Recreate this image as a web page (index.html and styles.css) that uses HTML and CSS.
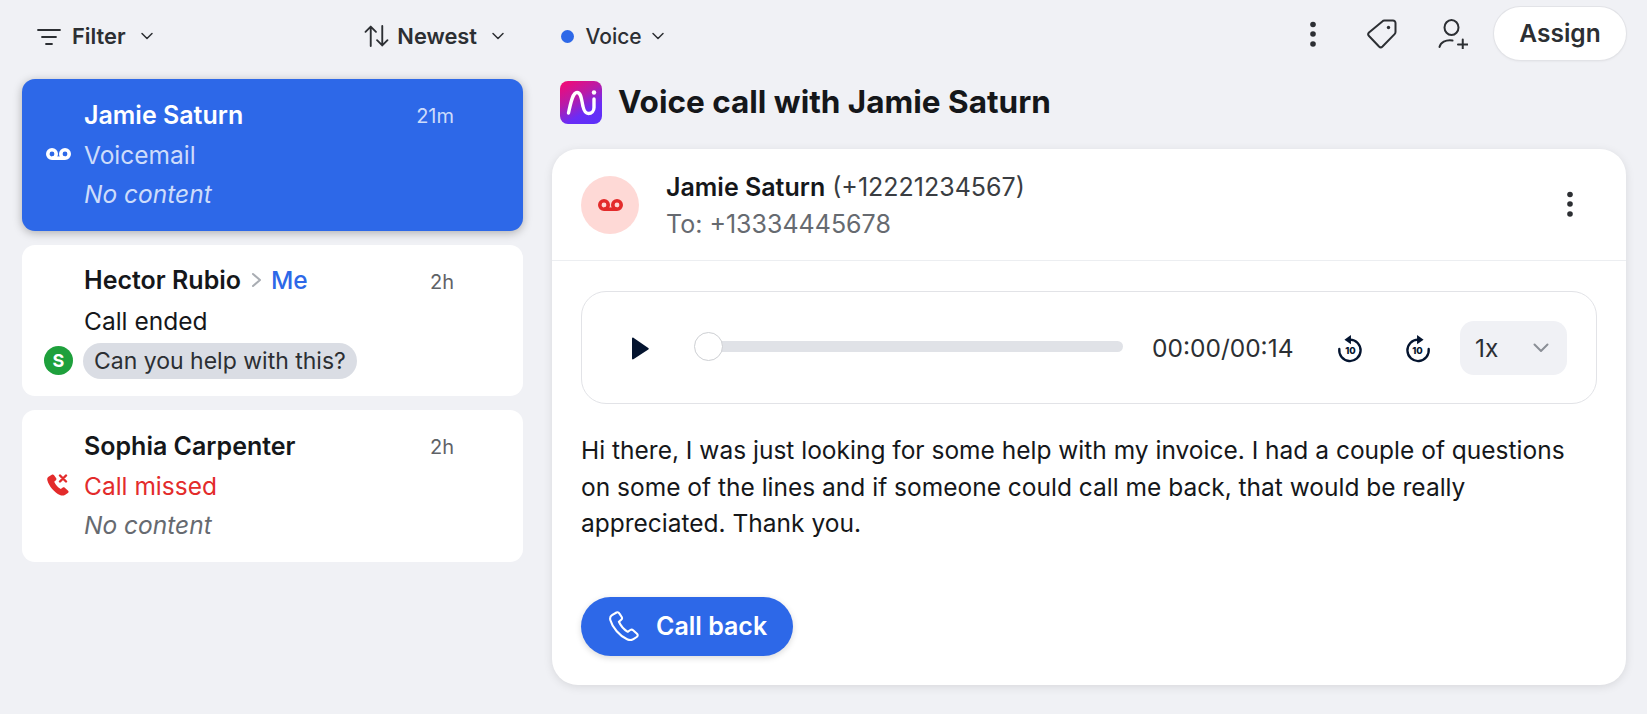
FILE: index.html
```html
<!DOCTYPE html>
<html lang="en">
<head>
<meta charset="utf-8">
<title>Voice call with Jamie Saturn</title>
<link rel="stylesheet" href="styles.css">
</head>
<body>
<div class="app">
  <header class="toolbar">
    <div class="toolbar-left">
      <button class="tool">
        <svg class="ic-filter" viewBox="0 0 24 17" fill="none" stroke="#2c2f33" stroke-width="1.8" stroke-linecap="round"><path d="M1 2h22M5 9h14M9 16h6"/></svg>
        <span>Filter</span>
        <svg class="ic-chev" viewBox="0 0 12 8" fill="none" stroke="#2c2f33" stroke-width="1.5" stroke-linecap="round" stroke-linejoin="round"><path d="M1 1.5l5 5 5-5"/></svg>
      </button>
      <button class="tool tool-sort">
        <svg class="ic-sort" viewBox="0 0 23 21" fill="none" stroke="#2c2f33" stroke-width="1.8" stroke-linecap="round" stroke-linejoin="round"><path d="M6 20V1.5M1 6.500l5-5 5 5M17 1v18.500M12 14.500l5 5 5-5"/></svg>
        <span>Newest</span>
        <svg class="ic-chev" viewBox="0 0 12 8" fill="none" stroke="#2c2f33" stroke-width="1.5" stroke-linecap="round" stroke-linejoin="round"><path d="M1 1.5l5 5 5-5"/></svg>
      </button>
    </div>
    <div class="toolbar-right">
      <button class="tool tool-voice">
        <span class="dot"></span>
        <span>Voice</span>
        <svg class="ic-chev" viewBox="0 0 12 8" fill="none" stroke="#2c2f33" stroke-width="1.5" stroke-linecap="round" stroke-linejoin="round"><path d="M1 1.5l5 5 5-5"/></svg>
      </button>
      <div class="actions">
        <svg class="ic-kebab" viewBox="0 0 8 26" fill="#2c2f33"><circle cx="4" cy="3.500" r="2.800"/><circle cx="4" cy="13" r="2.800"/><circle cx="4" cy="23" r="2.800"/></svg>
        <svg class="ic-tag" viewBox="0 0 30 31" fill="none" stroke="#2c2f33" stroke-width="2" stroke-linejoin="round"><path d="M17.500 2.500h8.500a2.500 2.500 0 0 1 2.500 2.500v9a3 3 0 0 1-.9 2.100L15.500 28.500a2.500 2.500 0 0 1-3.500 0L2 18a2.500 2.500 0 0 1 0-3.500L15.300 3.400a3 3 0 0 1 2.200-.9z"/><circle cx="21.500" cy="9.500" r="1.700" fill="#2c2f33" stroke="none"/></svg>
        <svg class="ic-person" viewBox="0 0 30 31" fill="none" stroke="#2c2f33" stroke-width="2" stroke-linecap="round"><ellipse cx="13.500" cy="9.500" rx="7" ry="7.500"/><path d="M1.500 29c1-4.500 6-7.500 13-6.500M20 26.500h9.500M24.750 21.500v10"/></svg>
        <button class="assign">Assign</button>
      </div>
    </div>
  </header>

  <div class="body">
    <aside class="list">
      <article class="item item-active">
        <div class="name-row"><span class="name">Jamie Saturn</span></div>
        <time class="age">21m</time>
        <div class="lead">
          <svg class="ic-vm" viewBox="0 0 25 14" fill="none" stroke="currentColor" stroke-width="3.600"><circle cx="6" cy="7" r="4.200"/><circle cx="19" cy="7" r="4.200"/><path d="M6 11.200h13"/></svg>
        </div>
        <div class="line">Voicemail</div>
        <div class="line line-3 muted">No content</div>
      </article>

      <article class="item">
        <div class="name-row">
          <span class="name">Hector Rubio</span>
          <svg class="ic-gt" viewBox="0 0 11 16" fill="none" stroke="#a9adb3" stroke-width="2" stroke-linecap="round" stroke-linejoin="round"><path d="M2 2l7 6-7 6"/></svg>
          <span class="me">Me</span>
        </div>
        <time class="age">2h</time>
        <div class="line">Call ended</div>
        <div class="lead lead-3"><span class="avatar">S</span></div>
        <div class="line line-3"><span class="chip">Can you help with this?</span></div>
      </article>

      <article class="item">
        <div class="name-row"><span class="name">Sophia Carpenter</span></div>
        <time class="age">2h</time>
        <div class="lead">
          <svg class="ic-missed" viewBox="0 0 22 22" fill="#e32b2b"><path d="M4.800 0.800 1.500 2.800C0.300 3.600 0 5 .4 6.500c1.600 5.600 7 12 12.500 14.500 1.700.8 3.400.9 5-.1l3-2c.8-.6.900-1.500.2-2.200l-3.300-3c-.6-.5-1.400-.6-2-.1l-2 1.500C11 13.600 8.600 10.800 7.200 7.800l1.700-1.500c.6-.5.700-1.400.3-2L6.900 1.100C6.400.5 5.500.4 4.800.8z"/><path d="M13 1.500l6 6M19 1.500l-6 6" fill="none" stroke="#e32b2b" stroke-width="2.400" stroke-linecap="round"/></svg>
        </div>
        <div class="line line-red">Call missed</div>
        <div class="line line-3 italic-grey">No content</div>
      </article>
    </aside>

    <main class="detail">
      <h1 class="title">
        <svg class="logo" viewBox="0 0 42 43">
          <defs><linearGradient id="lg" x1="0.150" y1="0" x2="0.700" y2="1"><stop offset="0" stop-color="#f00a78"/><stop offset="0.400" stop-color="#b81ca8"/><stop offset="0.750" stop-color="#6b2cf5"/><stop offset="1" stop-color="#5f30f8"/></linearGradient></defs>
          <rect width="42" height="43" rx="8" fill="url(#lg)"/>
          <path d="M8.500 32C11 20 13 11.500 17 11.500c4.500 0 4.500 8 6 14 1 4.500 2.500 7 5.500 7s5.500-2.500 5.500-6V18" fill="none" stroke="#fff" stroke-width="3.400" stroke-linecap="round"/>
          <circle cx="34" cy="11.500" r="2.200" fill="#fff"/>
        </svg>
        <span>Voice call with Jamie Saturn</span>
      </h1>

      <section class="card">
        <div class="card-head">
          <div class="vm-avatar">
            <svg class="ic-vm" viewBox="0 0 25 14" fill="none" stroke="#e32b2b" stroke-width="3.600"><circle cx="6" cy="7" r="4.200"/><circle cx="19" cy="7" r="4.200"/><path d="M6 11.200h13"/></svg>
          </div>
          <div class="who">
            <div class="who-name"><strong>Jamie Saturn</strong> (+12221234567)</div>
            <div class="who-to">To: +13334445678</div>
          </div>
          <svg class="ic-kebab ic-kebab-card" viewBox="0 0 8 26" fill="#2c2f33"><circle cx="4" cy="3.500" r="2.800"/><circle cx="4" cy="13" r="2.800"/><circle cx="4" cy="23" r="2.800"/></svg>
        </div>

        <div class="card-body">
          <div class="player">
            <svg class="ic-play" viewBox="0 0 18 23" fill="#04142f"><path d="M1 1.500v20c0 .8.700 1.200 1.400.8L17.300 12.500c.6-.4.600-1.100 0-1.500L2.400.7C1.700.3 1 .7 1 1.500z"/></svg>
            <div class="track"><span class="thumb"></span></div>
            <span class="clock">00:00/00:14</span>
            <svg class="ic-skip" viewBox="0 0 28 30" fill="none"><path d="M2.500 15.500a11.500 11.500 0 1 0 11.500-10" stroke="#04142f" stroke-width="2.500" stroke-linecap="round"/><path d="M15 .5v10l-7-5z" fill="#04142f"/><text x="14.500" y="21" class="skip-txt">10</text></svg>
            <svg class="ic-skip ic-skip-fwd" viewBox="0 0 28 30" fill="none"><path d="M25.500 15.500a11.500 11.500 0 1 1-11.500-10" stroke="#04142f" stroke-width="2.500" stroke-linecap="round"/><path d="M13 .5v10l7-5z" fill="#04142f"/><text x="13.500" y="21" class="skip-txt">10</text></svg>
            <div class="speed">
              <span>1x</span>
              <svg class="ic-chev-grey" viewBox="0 0 16 10" fill="none" stroke="#8b8f96" stroke-width="2" stroke-linecap="round" stroke-linejoin="round"><path d="M1.500 1.500 8 8l6.500-6.500"/></svg>
            </div>
          </div>

          <p class="transcript">Hi there, I was just looking for some help with my invoice. I had a couple of questions on some of the lines and if someone could call me back, that would be really appreciated. Thank you.</p>

          <button class="call-back">
            <svg class="ic-phone" viewBox="0 0 30 30" fill="none" stroke="#fff" stroke-width="2.100" stroke-linejoin="round"><path d="M7.500 1.500 3 4.200C1.300 5.300.8 7 1.300 9c2 7.500 9.500 16 16.800 19.300 2.200 1 4.300 1.200 6.300-.1l3.300-2.200c1.200-.8 1.300-2.200.3-3.200l-3.900-3.600c-.8-.7-1.900-.8-2.800-.2l-2.600 1.800c-3.900-2.300-7-6-8.800-10l2.300-2c.8-.7 1-1.900.5-2.800L10.300 2.400c-.6-1-1.800-1.400-2.800-.9z"/></svg>
            <span>Call back</span>
          </button>
        </div>
      </section>
    </main>
  </div>
</div>
</body>
</html>
```

FILE: styles.css
```css
* { box-sizing: border-box; }
html, body { margin: 0; padding: 0; }
body {
  background: #f0f1f5;
  font-family: Inter, "Liberation Sans", sans-serif;
  color: #15171a;
  height: 714px;
  overflow: hidden;
}
button { font-family: inherit; border: 0; background: none; padding: 0; cursor: pointer; }
svg { display: block; flex: none; }

.app { width: 1647px; }

/* toolbar */
.toolbar { display: grid; grid-template-columns: 552px 1fr; height: 79px; }
.toolbar-left {
  display: flex; justify-content: space-between; align-items: center;
  padding: 0 47px 7px 37px;
}
.toolbar-right {
  display: flex; justify-content: space-between; align-items: center;
  padding: 0 21px 13px 8.500px;
}
.tool {
  display: flex; align-items: center; gap: 11px;
  font-size: 21.800px; font-weight: 600; color: #2c2f33;
}
.tool-sort { gap: 8px; }
.tool-sort .ic-chev { margin-left: 6px; }
.tool-voice { font-weight: 500; font-size: 21px; gap: 12px; margin-top: 6px; }
.tool-voice .ic-chev { margin-left: -3px; }
.ic-filter { width: 24px; height: 17px; }
.ic-sort { width: 25px; height: 22px; }
.ic-chev { width: 14px; height: 8px; margin-left: 3px; }
.dot { width: 13px; height: 13px; border-radius: 50%; background: #2d68e8; }
.actions { display: flex; align-items: center; }
.ic-kebab { width: 8px; height: 26px; margin-right: 49px; margin-top: 2px; }
.ic-tag { width: 30px; height: 31px; margin-right: 41px; margin-left: 1px; }
.ic-person { width: 30px; height: 31px; margin-right: 26px; }
.assign {
  width: 132px; height: 53px; border-radius: 27px; background: #fff;
  font-size: 24.500px; font-weight: 600; color: #2c2f33;
  box-shadow: 0 0 0 1px #e2e3e7, 0 1px 3px rgba(0,0,0,.08);
}

/* layout */
.body { display: grid; grid-template-columns: 552px 1fr; }

/* list */
.list { padding-left: 22px; display: flex; flex-direction: column; gap: 14px; }
.item {
  width: 501px; height: 151.500px; border-radius: 13px; background: #fff;
  padding: 16px 69px 0 0;
  display: grid; grid-template-columns: 62px 1fr auto; grid-template-rows: repeat(3, 39.500px);
  align-items: center;
}
.name-row { grid-column: 2; grid-row: 1; display: flex; align-items: center; gap: 9.500px; }
.name { font-size: 25px; font-weight: 600; color: #15171a; }
.me { font-size: 24.500px; font-weight: 500; color: #2d68e8; }
.ic-gt { width: 11px; height: 16px; }
.age { grid-column: 3; grid-row: 1; font-size: 20px; color: #5f6267; padding-top: 3px; }
.lead { grid-column: 1; grid-row: 2; display: flex; justify-content: center; padding-left: 10px; }
.lead-3 { grid-row: 3; padding-left: 11px; padding-top: 2px; }
.line { grid-column: 2 / span 2; grid-row: 2; font-size: 24.500px; color: #15171a; padding-top: 2px; }
.line-3 { grid-row: 3; padding-top: 0; }
.line-red { color: #e32b2b; }
.italic-grey { font-style: italic; color: #666a70; }
.ic-vm { width: 25px; height: 14px; }
.ic-missed { width: 22px; height: 22px; }

.item-active { background: #2d68e8; box-shadow: 0 2px 10px rgba(0,0,0,.28); }
.item-active .name { color: #fff; }
.item-active .age, .item-active .line { color: #cddcfb; }
.item-active .lead { color: #fff; }
.muted { font-style: italic; }

.avatar {
  width: 29px; height: 29px; border-radius: 50%; background: #1ea03c; color: #fff;
  font-size: 18px; font-weight: 700; display: flex; align-items: center; justify-content: center;
}
.chip {
  display: inline-flex; align-items: center; height: 36px; padding: 0 11px; margin: 4px 0 0 -1px;
  border-radius: 18px; background: #dadde4; color: #2c2f33; font-size: 23px;
}

/* detail */
.detail { padding-right: 21px; }
.title {
  margin: 0 0 26px 8px; height: 44px; display: flex; align-items: center; gap: 16px;
  font-size: 31.500px; font-weight: 700; color: #15171a;
}
.logo { width: 42px; height: 43px; margin-top: 2px; }
.card {
  height: 536px; background: #fff; border-radius: 26px;
  box-shadow: 0 2px 10px rgba(0,0,0,.1);
}
.card-head {
  height: 112px; border-bottom: 1px solid #eceef1;
  display: flex; align-items: center; padding: 0 52px 0 29px;
}
.vm-avatar {
  width: 58px; height: 58px; border-radius: 50%; background: #fed9d6;
  display: flex; align-items: center; justify-content: center;
}
.who { margin-left: 27px; flex: 1; padding-top: 2px; }
.who-name { font-size: 25px; color: #3a3d42; line-height: 37px; }
.who-name strong { font-weight: 600; color: #15171a; }
.who-to { font-size: 25px; color: #666a70; line-height: 37px; }
.ic-kebab-card { margin: 0 0 2px; }

.card-body { padding: 30px 29px 0 29px; }
.player {
  height: 113px; border: 1px solid #e2e3e7; border-radius: 25px;
  display: flex; align-items: center; position: relative;
}
.ic-play { width: 18px; height: 23px; margin-left: 48.500px; margin-top: 2px; }
.track {
  margin-left: 56.500px; width: 418px; height: 11px; background: #e0e2e7; position: relative; border-radius: 6px; margin-top: -2px;
}
.thumb {
  position: absolute; left: -11px; top: -9px; width: 29px; height: 29px; border-radius: 50%;
  background: #fff; border: 1px solid #cdcfd3;
}
.clock { margin-left: 29px; font-size: 24.500px; color: #2c2f33; width: 144px; white-space: nowrap; }
.ic-skip { width: 26px; height: 29px; margin-left: 41px; margin-top: 2px; }
.ic-skip-fwd { margin-left: 42px; }
.skip-txt { font: 800 10px Inter, sans-serif; fill: #04142f; text-anchor: middle; }
.speed {
  margin-left: 29px; width: 107px; height: 54px; border-radius: 14px; background: #f0f1f5;
  display: flex; align-items: center; justify-content: space-between; padding: 0 18px 0 15px;
  font-size: 24.500px; color: #2c2f33;
}
.ic-chev-grey { width: 16px; height: 10px; }
.transcript {
  margin: 28px 0 0; font-size: 24.500px; line-height: 36.500px; color: #15171a;
}
.call-back {
  margin-top: 55px; width: 212px; height: 59px; border-radius: 30px; background: #2d68e8; color: #fff;
  display: flex; align-items: center; padding-left: 28px; gap: 17px;
  font-size: 25px; font-weight: 600;
  box-shadow: 0 2px 6px rgba(0,0,0,.15);
}
.ic-phone { width: 30px; height: 30px; }
```
